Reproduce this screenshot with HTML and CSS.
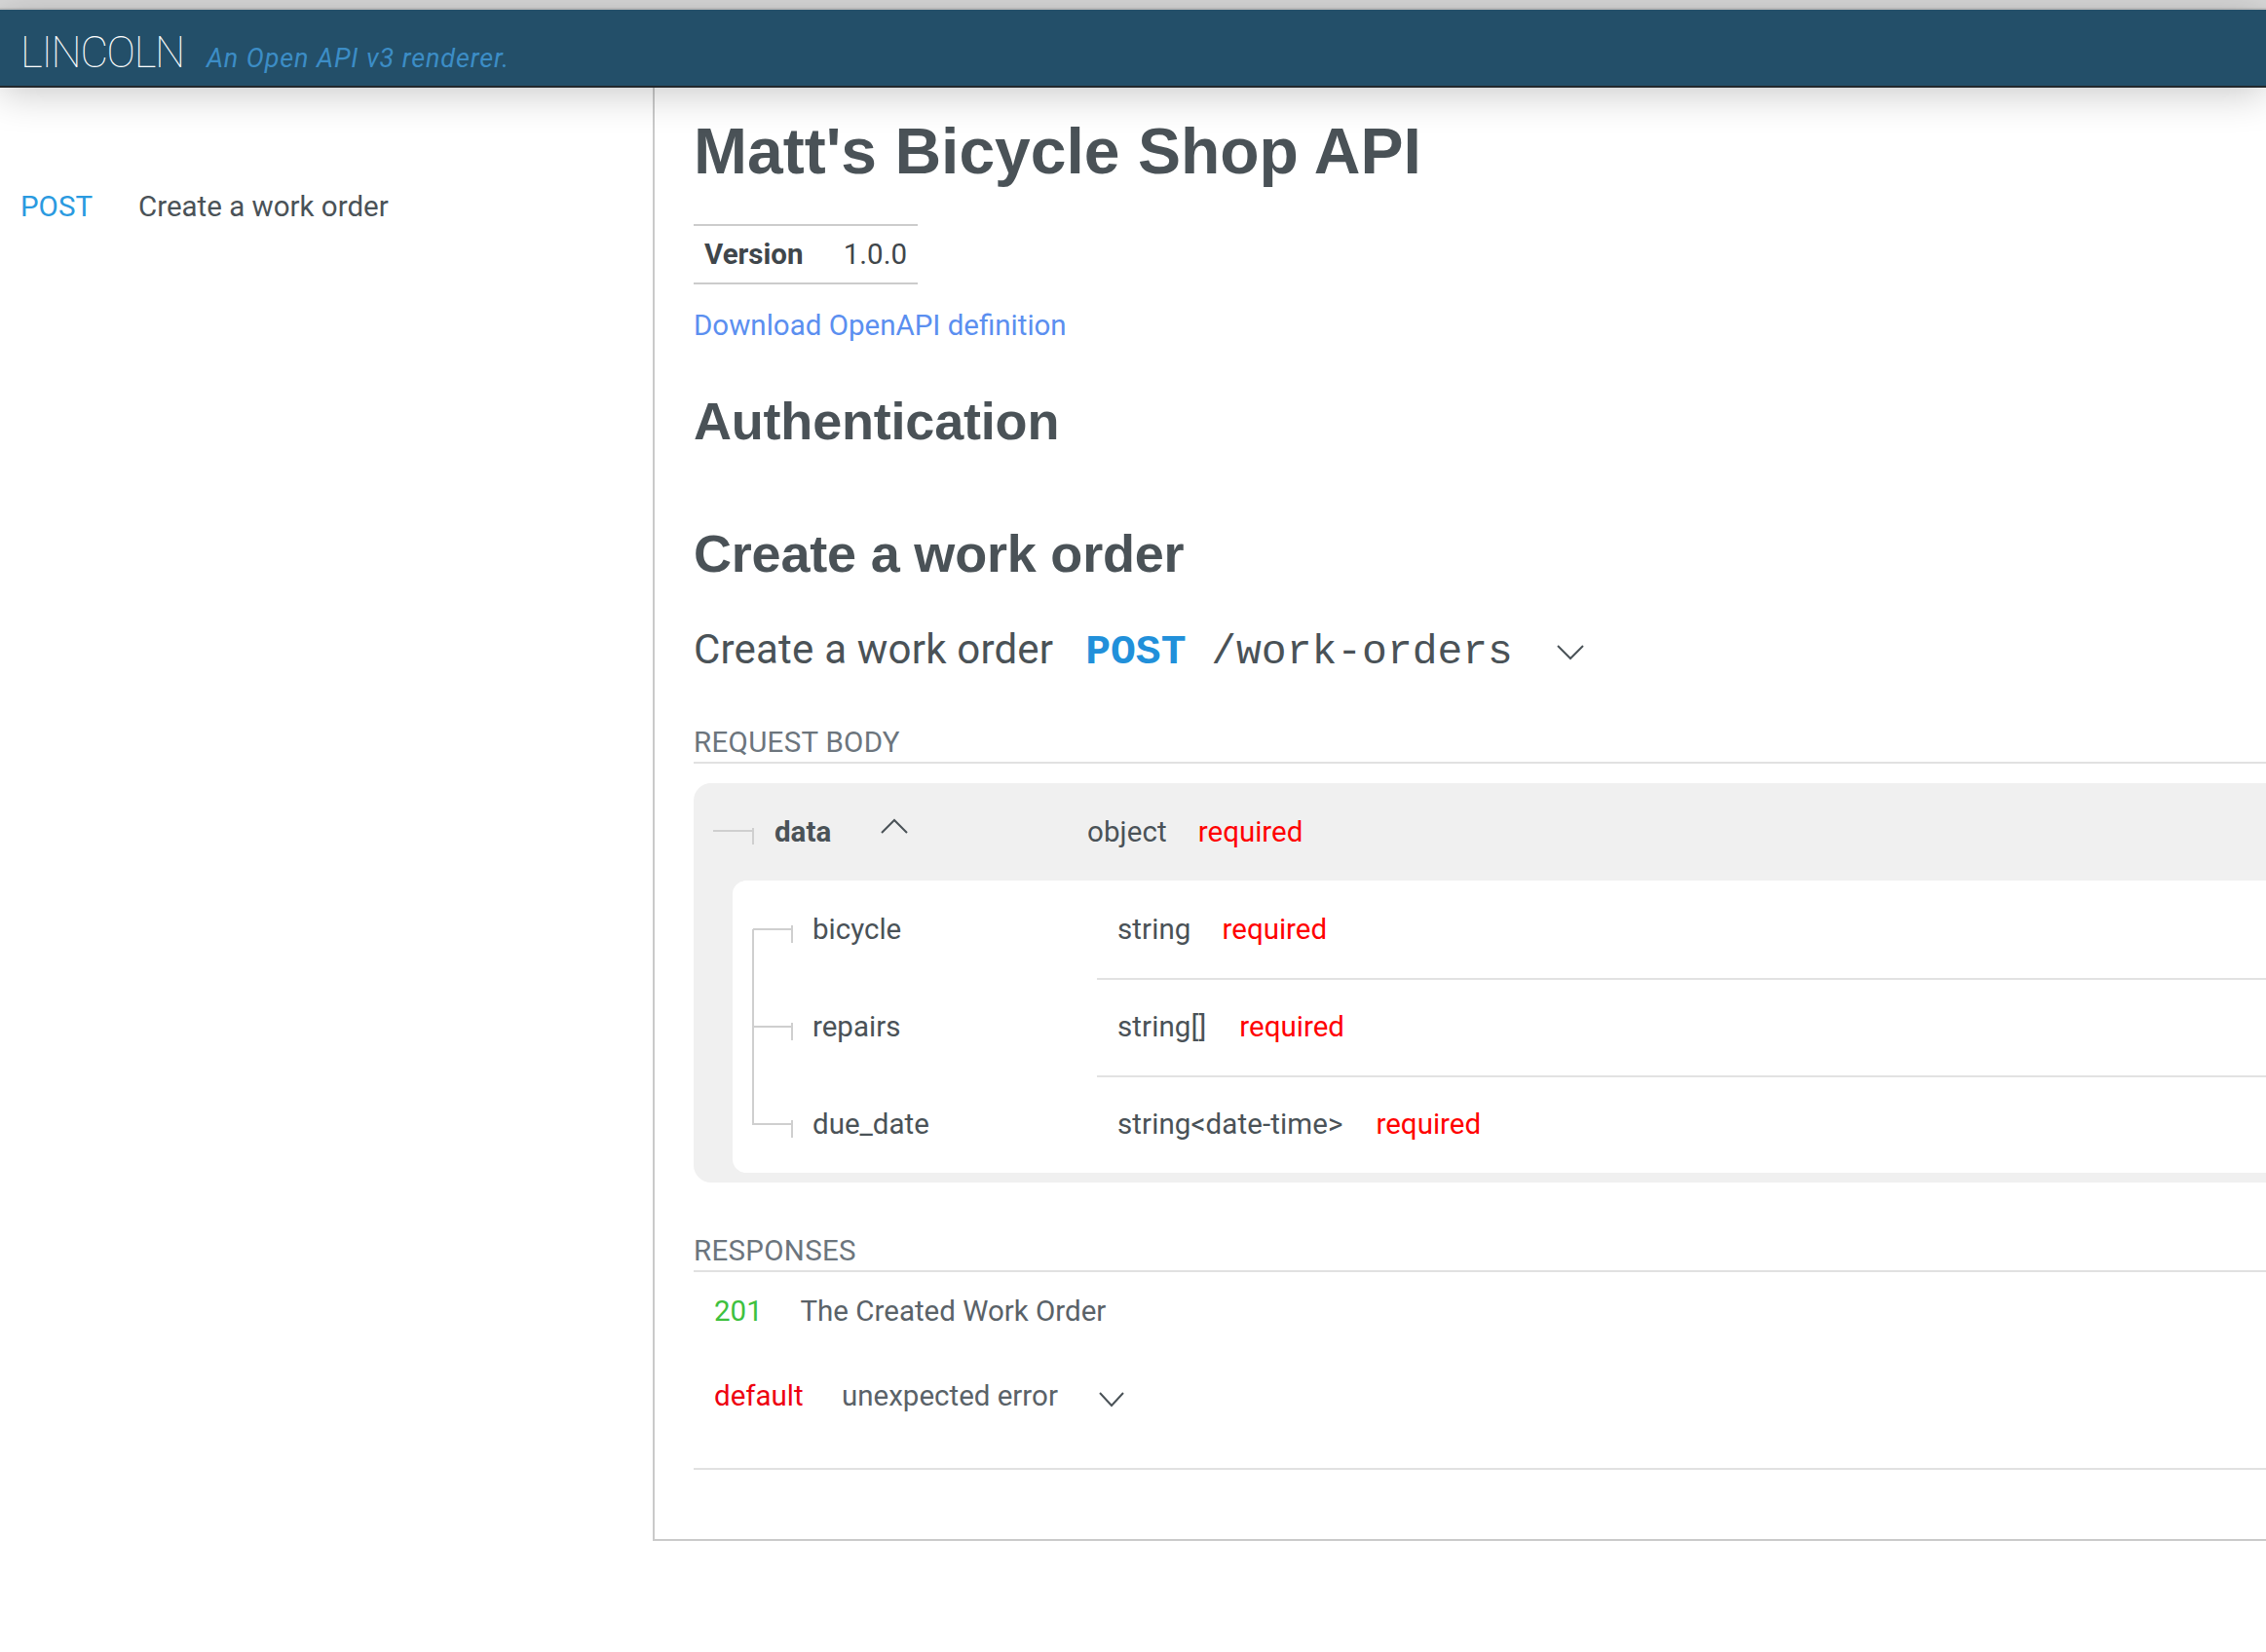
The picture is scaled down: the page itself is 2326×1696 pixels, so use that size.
FILE: index.html
```html
<!DOCTYPE html>
<html lang="en">
<head>
<meta charset="utf-8">
<title>Lincoln - Matt's Bicycle Shop API</title>
<link rel="stylesheet" href="styles.css">
</head>
<body>
<div class="chrome"></div>
<header class="topbar">
  <span class="brand">LINCOLN</span>
  <span class="tagline">An Open API v3 renderer.</span>
</header>
<div class="layout">
  <nav class="sidebar">
    <a class="nav-item" href="#create-a-work-order"><span class="nav-method">POST</span><span class="nav-label">Create a work order</span></a>
  </nav>
  <main class="content">
    <h1 class="title">Matt's Bicycle Shop API</h1>
    <div class="info">
      <span class="info-key">Version</span>
      <span class="info-val">1.0.0</span>
    </div>
    <a class="download" href="#">Download OpenAPI definition</a>
    <h2 class="section">Authentication</h2>
    <h2 class="section section-op" id="create-a-work-order">Create a work order</h2>
    <div class="endpoint">
      <span class="ep-summary">Create a work order</span>
      <span class="ep-code"><span class="ep-method">POST</span> /work-orders</span>
      <svg class="ep-chevron" width="28" height="56" viewBox="0 0 28 56"><path d="M1 24 L14 37 L27 24" fill="none" stroke="#4a5257" stroke-width="2"/></svg>
    </div>

    <div class="label">REQUEST BODY</div>
    <div class="schema">
      <div class="row row-root">
        <div class="cell-name cell-name-root">
          <svg class="tree" width="42" height="100" viewBox="0 0 42 100"><path d="M0 49 H41 M41 46 V63" fill="none" stroke="#cfcfcf" stroke-width="2"/></svg>
          <span class="prop prop-root">data</span>
          <svg class="toggle" width="28" height="100" viewBox="0 0 28 100"><path d="M1 51 L14 38 L27 51" fill="none" stroke="#4a5257" stroke-width="2"/></svg>
        </div>
        <div class="cell-type cell-type-root"><span class="type">object</span><span class="req">required</span></div>
      </div>
      <div class="children">
        <div class="row">
          <div class="cell-name">
            <svg class="tree" width="42" height="100" viewBox="0 0 42 100"><path d="M1 50 V100 M1 50 H41 M41 46 V64" fill="none" stroke="#cfcfcf" stroke-width="2"/></svg>
            <span class="prop">bicycle</span>
          </div>
          <div class="cell-type"><span class="type">string</span><span class="req">required</span></div>
        </div>
        <div class="row">
          <div class="cell-name">
            <svg class="tree" width="42" height="100" viewBox="0 0 42 100"><path d="M1 0 V100 M1 50 H41 M41 46 V64" fill="none" stroke="#cfcfcf" stroke-width="2"/></svg>
            <span class="prop">repairs</span>
          </div>
          <div class="cell-type cell-type-div"><span class="type">string[]</span><span class="req">required</span></div>
        </div>
        <div class="row">
          <div class="cell-name">
            <svg class="tree" width="42" height="100" viewBox="0 0 42 100"><path d="M1 0 V51 M1 50 H41 M41 46 V64" fill="none" stroke="#cfcfcf" stroke-width="2"/></svg>
            <span class="prop">due_date</span>
          </div>
          <div class="cell-type cell-type-div"><span class="type">string&lt;date-time&gt;</span><span class="req">required</span></div>
        </div>
      </div>
    </div>

    <div class="label label-resp">RESPONSES</div>
    <div class="responses">
      <div class="resp">
        <span class="code code-ok">201</span>
        <span class="resp-desc">The Created Work Order</span>
      </div>
      <div class="resp">
        <span class="code code-err">default</span>
        <span class="resp-desc">unexpected error</span>
        <svg class="resp-chevron" width="26" height="40" viewBox="0 0 26 40"><path d="M1 17 L13 30 L25 17" fill="none" stroke="#4a5257" stroke-width="2"/></svg>
      </div>
    </div>
  </main>
</div>
</body>
</html>
```

FILE: styles.css
```css
* {
  box-sizing: border-box;
}

html,
body {
  margin: 0;
  padding: 0;
  overflow: hidden;
  background: #ffffff;
}

body {
  width: 2326px;
  height: 1696px;
  font-family: Roboto, "Liberation Sans", Arial, sans-serif;
  font-size: 29.5px;
  color: #495057;
}

.chrome {
  height: 10px;
  background: #d8d8d8;
  border-bottom: 2px solid #c6c6c6;
}

.topbar {
  position: relative;
  z-index: 2;
  height: 80px;
  background: #234f69;
  border-bottom: 2px solid #23292d;
  display: flex;
  align-items: baseline;
  padding: 22px 0 0 21px;
  box-shadow: 0 6px 40px rgba(0, 0, 0, 0.22);
}

.brand {
  font-family: Roboto, "Liberation Sans", sans-serif;
  font-weight: 100;
  font-size: 44px;
  line-height: 44px;
  color: #ffffff;
  letter-spacing: -1.3px;
}

.tagline {
  margin-left: 23px;
  font-style: italic;
  font-size: 27px;
  line-height: 44px;
  color: #3c8dc6;
  letter-spacing: 0.9px;
}

.layout {
  display: flex;
  align-items: flex-start;
  width: 3200px;
}

.sidebar {
  flex: 0 0 670px;
  padding: 102px 0 0 21px;
}

.nav-item {
  display: flex;
  line-height: 40px;
  text-decoration: none;
}

.nav-method {
  width: 121px;
  color: #2a9ae0;
}

.nav-label {
  color: #4a5257;
}

.content {
  flex: 0 0 2500px;
  border-left: 2px solid #cacaca;
  border-bottom: 2px solid #cacaca;
  padding: 0 0 71px 40px;
}

.title {
  margin: 25px 0 0;
  font-family: "Liberation Sans", Arial, sans-serif;
  font-size: 66px;
  line-height: 80px;
  font-weight: 700;
  color: #4a5257;
  letter-spacing: 0;
}

.info {
  display: flex;
  width: 230px;
  margin-top: 35px;
  border-top: 2px solid #cccccc;
  border-bottom: 2px solid #cccccc;
  line-height: 58px;
  color: #3f464b;
}

.info-key {
  font-weight: 700;
  padding: 0 19px 0 11px;
}

.info-val {
  margin-left: auto;
  padding: 0 11px 0 0;
}

.download {
  display: block;
  margin-top: 22px;
  line-height: 40px;
  color: #5b8ff0;
  text-decoration: none;
}

.section {
  margin: 46px 0 0;
  font-family: "Liberation Sans", Arial, sans-serif;
  font-size: 54px;
  line-height: 64px;
  font-weight: 700;
  color: #4a5257;
  letter-spacing: -0.2px;
}

.section-op {
  margin-top: 72px;
}

.endpoint {
  display: flex;
  align-items: baseline;
  height: 56px;
  margin-top: 39px;
}

.ep-summary {
  font-size: 42px;
  line-height: 56px;
  color: #4a5257;
  letter-spacing: 0.2px;
}

.ep-code {
  margin-left: 33px;
  font-family: "Liberation Mono", "Courier New", monospace;
  font-size: 43px;
  line-height: 56px;
  color: #4a5257;
}

.ep-method {
  font-weight: 700;
  color: #2190da;
}

.ep-chevron {
  align-self: flex-start;
  margin-left: 45px;
}

.label {
  margin-top: 48px;
  line-height: 39px;
  color: #6c757d;
  border-bottom: 2px solid #e1e1e1;
  letter-spacing: 0.3px;
}

.label-resp {
  margin-top: 51px;
}

.schema {
  margin-top: 20px;
  background: #f0f0f0;
  border-radius: 18px;
  padding-bottom: 10px;
}

.row {
  display: flex;
  height: 100px;
  line-height: 100px;
}

.cell-name {
  flex: 0 0 374px;
  display: flex;
  padding-left: 20px;
}

.cell-name-root {
  flex-basis: 404px;
}

.tree {
  flex: 0 0 42px;
}

.prop {
  margin-left: 20px;
  color: #4a5257;
}

.prop-root {
  margin-left: 21px;
  font-weight: 700;
}

.toggle {
  margin-left: 51px;
}

.cell-type {
  flex: 1;
  padding-left: 21px;
  color: #4a5257;
}

.cell-type-root {
  padding-left: 0;
}

.cell-type-div {
  border-top: 2px solid #e2e2e2;
  line-height: 96px;
}

.type {
  letter-spacing: 0.1px;
}

.req {
  margin-left: 32px;
  color: #ff0000;
}

.cell-type-div .req {
  margin-left: 34px;
}

.children {
  margin-left: 40px;
  background: #ffffff;
  border-radius: 14px;
}

.responses {
  border-bottom: 2px solid #e1e1e1;
  padding-bottom: 27px;
}

.resp {
  padding: 20px 0 27px 21px;
  line-height: 40px;
}

.code {
  margin-right: 32px;
}

.code-ok {
  color: #3ec13e;
}

.code-err {
  color: #ee0010;
}

.resp-desc {
  color: #5a6268;
}

.resp-chevron {
  vertical-align: top;
  margin-left: 35px;
}
```
